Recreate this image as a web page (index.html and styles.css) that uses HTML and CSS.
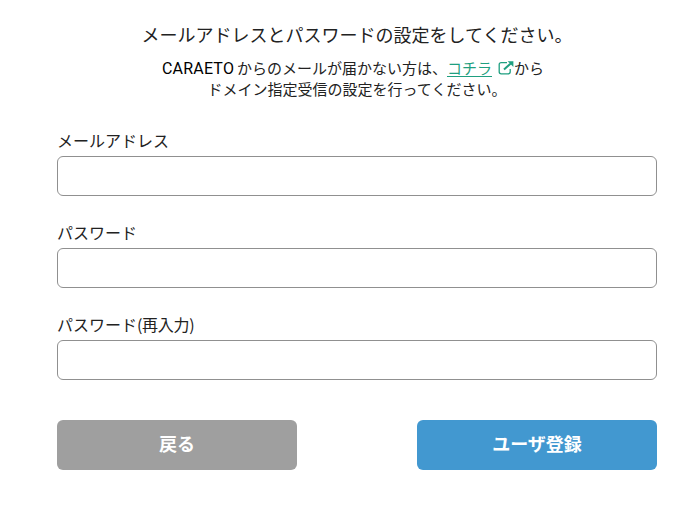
FILE: index.html
```html
<!DOCTYPE html>
<html lang="ja">

<head>
    <meta charset="UTF-8">
    <meta name="viewport" content="width=device-width, initial-scale=1.0">
    <title>ユーザ登録</title>
    <link rel="stylesheet" href="styles.css">
</head>

<body>

    <main class="register">
        <h1 class="title">メールアドレスとパスワードの設定をしてください。</h1>
        <p class="note">
            <span class="brand">CARAETO</span>からのメールが届かない方は、<a href="#" class="link">コチラ</a><svg class="icon" viewBox="0 0 16 14" aria-hidden="true">
                <path d="M9 1.6H3.2Q1.2 1.6 1.2 3.6V10.8Q1.2 12.8 3.2 12.8H10.2Q12.2 12.8 12.2 10.8V8" fill="none" stroke="currentColor" stroke-width="1.3" />
                <path d="M6 8.6L13 2.3" stroke="currentColor" stroke-width="2" />
                <path d="M9.6 0.2H15.4V6Z" fill="currentColor" />
            </svg><span class="after-icon">から</span><br>ドメイン指定受信の設定を行ってください。
        </p>

        <form class="form">
            <div class="field">
                <label for="email">メールアドレス</label>
                <input type="email" id="email">
            </div>
            <div class="field">
                <label for="password">パスワード</label>
                <input type="password" id="password">
            </div>
            <div class="field">
                <label for="confirm">パスワード<span class="paren">(再入力)</span></label>
                <input type="password" id="confirm">
            </div>

            <div class="buttons">
                <button type="button" class="btn btn-back">戻る</button>
                <button type="submit" class="btn btn-submit">ユーザ登録</button>
            </div>
        </form>
    </main>

</body>

</html>
```

FILE: styles.css
```css
* {
    margin: 0;
    padding: 0;
    box-sizing: border-box;
}

body {
    font-family: "Noto Sans CJK JP", sans-serif;
    background-color: #fff;
    color: #222;
}

.register {
    width: 600px;
    margin-left: 57px;
    padding-top: 21px;
}

.title {
    font-size: 18px;
    font-weight: 400;
    line-height: 26px;
    text-align: center;
}

.note {
    height: 42px;
    margin-top: 10px;
    font-size: 15px;
    line-height: 21px;
    text-align: center;
}

.brand {
    display: inline-block;
    width: 75px;
    font-family: Roboto, sans-serif;
    font-size: 16px;
    letter-spacing: 0.2px;
    line-height: 16px;
    text-align: left;
    color: #000;
}

.link {
    color: #1f9f80;
    text-decoration: underline;
    text-underline-offset: 2px;
}

.icon {
    width: 16px;
    height: 14px;
    margin-left: 6px;
    vertical-align: -1px;
    color: #1f9f80;
}

.after-icon {
    margin-right: 8px;
}

.form {
    margin-top: 29px;
}

.field {
    margin-bottom: 24px;
}

.field label {
    display: block;
    margin-bottom: 4px;
    font-size: 16px;
    line-height: 24px;
}

.paren {
    letter-spacing: -0.3px;
}

.field input {
    display: block;
    width: 100%;
    height: 40px;
    padding: 0 10px;
    font-size: 16px;
    background-color: #fff;
    border: 1px solid #909090;
    border-radius: 6px;
}

.buttons {
    display: flex;
    justify-content: space-between;
    margin-top: 40px;
}

.btn {
    width: 240px;
    height: 50px;
    padding-bottom: 4px;
    font-family: inherit;
    font-size: 18px;
    font-weight: 700;
    color: #fff;
    border: none;
    border-radius: 6px;
    cursor: pointer;
}

.btn-back {
    background-color: #9f9f9f;
}

.btn-submit {
    background-color: #4298d0;
}
```
